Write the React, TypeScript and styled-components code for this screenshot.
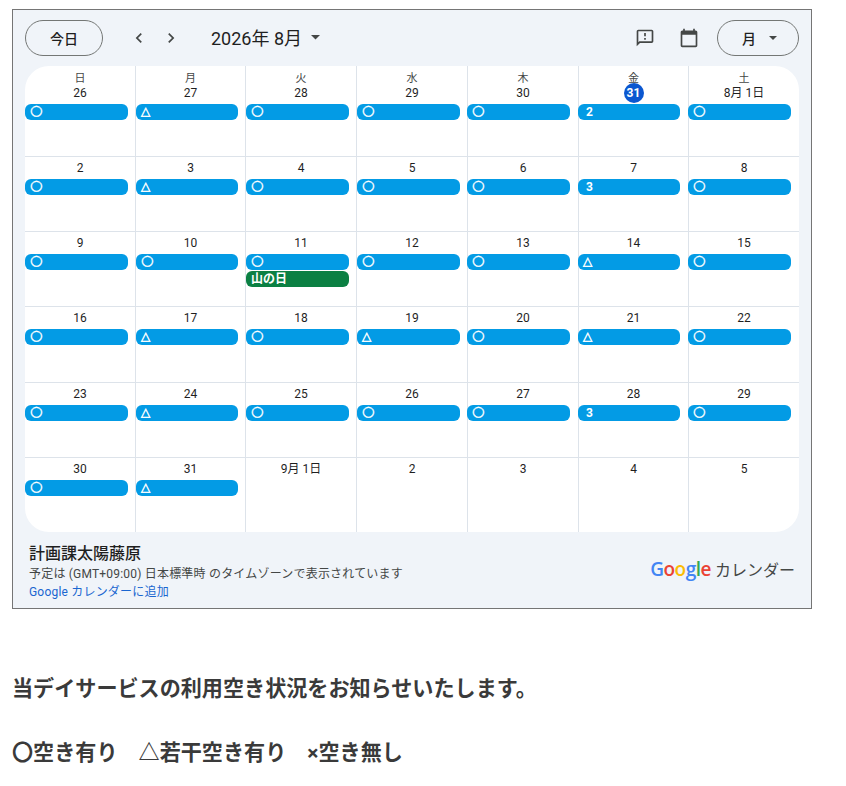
import styled, { createGlobalStyle } from 'styled-components';

const sans = `Roboto, "Noto Sans CJK JP", sans-serif`;

const GlobalStyle = createGlobalStyle`
    html, body {
        margin: 0;
        padding: 0;
        background: #fff;
    }
`;

type Day = { label: string, mark?: string, holiday?: string, today?: boolean };

const weekdays = ['日', '月', '火', '水', '木', '金', '土'];

const days: Day[] = [
    { label: '26', mark: '○' }, { label: '27', mark: '△' }, { label: '28', mark: '○' }, { label: '29', mark: '○' }, { label: '30', mark: '○' }, { label: '31', mark: '2', today: true }, { label: '8月 1日', mark: '○' },
    { label: '2', mark: '○' }, { label: '3', mark: '△' }, { label: '4', mark: '○' }, { label: '5', mark: '○' }, { label: '6', mark: '○' }, { label: '7', mark: '3' }, { label: '8', mark: '○' },
    { label: '9', mark: '○' }, { label: '10', mark: '○' }, { label: '11', mark: '○', holiday: '山の日' }, { label: '12', mark: '○' }, { label: '13', mark: '○' }, { label: '14', mark: '△' }, { label: '15', mark: '○' },
    { label: '16', mark: '○' }, { label: '17', mark: '△' }, { label: '18', mark: '○' }, { label: '19', mark: '△' }, { label: '20', mark: '○' }, { label: '21', mark: '△' }, { label: '22', mark: '○' },
    { label: '23', mark: '○' }, { label: '24', mark: '△' }, { label: '25', mark: '○' }, { label: '26', mark: '○' }, { label: '27', mark: '○' }, { label: '28', mark: '3' }, { label: '29', mark: '○' },
    { label: '30', mark: '○' }, { label: '31', mark: '△' }, { label: '9月 1日' }, { label: '2' }, { label: '3' }, { label: '4' }, { label: '5' },
];

const App = () => {
    return (
        <StyledPage>
            <GlobalStyle />
            <StyledFrame>
                <StyledToolbar>
                    <StyledPill $width={78}>今日</StyledPill>
                    <StyledNav>
                        <StyledIcon viewBox="0 0 24 24"><path d="M15.41 7.41 14 6l-6 6 6 6 1.41-1.41L10.83 12z" /></StyledIcon>
                        <StyledIcon viewBox="0 0 24 24"><path d="M8.59 16.59 10 18l6-6-6-6-1.41 1.41L13.17 12z" /></StyledIcon>
                    </StyledNav>
                    <StyledTitle>2026年 8月</StyledTitle>
                    <StyledCaret viewBox="0 0 10 5"><path d="M0 0l5 5 5-5z" /></StyledCaret>
                    <StyledToolbarRight>
                        <StyledIcon viewBox="0 0 24 24">
                            <path d="M20 2H4c-1.1 0-1.99.9-1.99 2L2 22l4-4h14c1.1 0 2-.9 2-2V4c0-1.1-.9-2-2-2zm0 14H5.17L4 17.17V4h16v12zm-9-4h2v2h-2zm0-6h2v4h-2z" />
                        </StyledIcon>
                        <StyledIcon viewBox="0 0 24 24">
                            <path d="M20 3h-1V1h-2v2H7V1H5v2H4c-1.1 0-2 .9-2 2v16c0 1.1.9 2 2 2h16c1.1 0 2-.9 2-2V5c0-1.1-.9-2-2-2zm0 18H4V8h16v13z" />
                        </StyledIcon>
                        <StyledPill $width={82}>
                            月
                            <StyledCaret viewBox="0 0 10 5"><path d="M0 0l5 5 5-5z" /></StyledCaret>
                        </StyledPill>
                    </StyledToolbarRight>
                </StyledToolbar>

                <StyledGrid>
                    {days.map((day, i) => (
                        <StyledCell key={i} $firstCol={i % 7 === 0} $firstRow={i < 7}>
                            {i < 7 && <StyledWeekday>{weekdays[i]}</StyledWeekday>}
                            <StyledDate>
                                {day.today ? <StyledToday>{day.label}</StyledToday> : day.label}
                            </StyledDate>
                            {day.mark && (
                                <StyledChip $color="#039be5" $overlap={i % 7 >= 4}>
                                    {day.mark === '○' && <StyledCircleMark>{day.mark}</StyledCircleMark>}
                                    {day.mark === '△' && <StyledTriangleMark>{day.mark}</StyledTriangleMark>}
                                    {day.mark !== '○' && day.mark !== '△' && <StyledCountMark>{day.mark}</StyledCountMark>}
                                </StyledChip>
                            )}
                            {day.holiday && <StyledChip $color="#0b8043" $overlap={false}>{day.holiday}</StyledChip>}
                        </StyledCell>
                    ))}
                </StyledGrid>

                <StyledFooter>
                    <div>
                        <StyledCalName>計画課太陽藤原</StyledCalName>
                        <StyledTimezone>予定は (GMT+09:00) 日本標準時 のタイムゾーンで表示されています</StyledTimezone>
                        <StyledAddLink>Google カレンダーに追加</StyledAddLink>
                    </div>
                    <StyledBrand>
                        <StyledLogo>
                            <StyledLetter $color="#4285f4">G</StyledLetter>
                            <StyledLetter $color="#ea4335">o</StyledLetter>
                            <StyledLetter $color="#fbbc05">o</StyledLetter>
                            <StyledLetter $color="#4285f4">g</StyledLetter>
                            <StyledLetter $color="#34a853">l</StyledLetter>
                            <StyledLetter $color="#ea4335">e</StyledLetter>
                        </StyledLogo>
                        <StyledBrandText>カレンダー</StyledBrandText>
                    </StyledBrand>
                </StyledFooter>
            </StyledFrame>

            <StyledNotice>当デイサービスの利用空き状況をお知らせいたします。</StyledNotice>
            <StyledLegend>〇空き有り　△若干空き有り　×空き無し</StyledLegend>
        </StyledPage>
    );
}

export default App;

const StyledPage = styled.div`
    padding: 9px 12px 0;
    height: 777px;
    overflow: hidden;
    font-family: ${sans};
`;

const StyledFrame = styled.div`
    box-sizing: border-box;
    width: 800px;
    height: 600px;
    border: 1px solid #757575;
    background: #f0f4f9;
    padding: 0 12px;
    display: flex;
    flex-direction: column;
    color: #1f1f1f;
`;

const StyledToolbar = styled.div`
    display: flex;
    align-items: center;
    height: 56px;
    flex: none;
`;

const StyledPill = styled.div<{ $width: number }>`
    box-sizing: border-box;
    width: ${p => p.$width}px;
    height: 36px;
    border: 1px solid #747775;
    border-radius: 18px;
    display: flex;
    align-items: center;
    justify-content: center;
    gap: 13px;
    font-size: 14px;
    font-weight: 500;
`;

const StyledNav = styled.div`
    display: flex;
    gap: 12px;
    margin-left: 26px;
`;

const StyledIcon = styled.svg`
    width: 20px;
    height: 20px;
    fill: #444746;
    display: block;
`;

const StyledTitle = styled.div`
    font-size: 18px;
    margin: 0 0 2px 30px;
`;

const StyledCaret = styled.svg`
    width: 9px;
    height: 4.5px;
    fill: #444746;
    margin: 0 0 1px 9px;
    display: block;
`;

const StyledToolbarRight = styled.div`
    margin-left: auto;
    display: flex;
    align-items: center;
    gap: 24px;

    ${StyledPill} {
        margin-left: -6px;
        padding-left: 3px;
    }

    ${StyledCaret} {
        width: 8px;
        height: 4px;
        margin: 0;
    }
`;

const StyledGrid = styled.div`
    flex: none;
    height: 466px;
    display: grid;
    grid-template-columns: 110px 110px 111px 111px 111px 110px 111px;
    grid-template-rows: 90px repeat(5, 1fr);
    background: #fff;
    border-radius: 24px;
    overflow: hidden;
`;

const StyledCell = styled.div<{ $firstCol: boolean, $firstRow: boolean }>`
    min-width: 0;
    box-sizing: border-box;
    border-left: ${p => p.$firstCol ? 'none' : '1px solid #dde3ea'};
    border-top: ${p => p.$firstRow ? 'none' : '1px solid #dde3ea'};
    padding-top: 1px;
    display: flex;
    flex-direction: column;
`;

const StyledWeekday = styled.div`
    height: 16px;
    line-height: 24px;
    text-align: center;
    font-size: 11px;
    color: #444746;
`;

const StyledDate = styled.div`
    height: 20px;
    line-height: 20px;
    margin-bottom: 1px;
    text-align: center;
    font-size: 12px;
`;

const StyledToday = styled.span`
    display: inline-block;
    width: 20px;
    height: 20px;
    border-radius: 50%;
    background: #0b57d0;
    color: #fff;
    font-weight: 700;
`;

const StyledChip = styled.div<{ $color: string, $overlap: boolean }>`
    box-sizing: border-box;
    height: 16px;
    flex: none;
    width: calc(100% - 7px);
    margin: 0 0 1px ${p => p.$overlap ? -1 : 0}px;
    padding-left: 5px;
    border-radius: 6px;
    background: ${p => p.$color};
    color: #fff;
    font-size: 12px;
    font-weight: 700;
    line-height: 16px;
    white-space: nowrap;
`;

const StyledCircleMark = styled.span`
    display: block;
    line-height: 13px;
    font-family: "DejaVu Sans", sans-serif;
    font-size: 14.5px;
    -webkit-text-stroke: 0.4px #fff;
`;

const StyledTriangleMark = styled.span`
    display: block;
    line-height: 14px;
    font-family: "DejaVu Sans", sans-serif;
    font-size: 12px;
    -webkit-text-stroke: 0.5px #fff;
`;

const StyledCountMark = styled.span`
    margin-left: 3px;
`;

const StyledFooter = styled.div`
    flex: 1;
    display: flex;
    align-items: center;
    justify-content: space-between;
    padding: 5px 4px 0;
`;

const StyledCalName = styled.div`
    font-size: 16px;
    line-height: 20px;
    margin-bottom: 1px;
    font-weight: 500;
`;

const StyledTimezone = styled.div`
    font-size: 12px;
    line-height: 18px;
    letter-spacing: 0.2px;
    color: #444746;
`;

const StyledAddLink = styled.div`
    font-size: 12px;
    line-height: 18px;
    letter-spacing: 0.2px;
    color: #1a66d0;
`;

const StyledBrand = styled.div`
    display: flex;
    align-items: center;
    gap: 4px;
    margin-bottom: 8px;
`;

const StyledLogo = styled.div`
    font-family: "Open Sans", sans-serif;
    font-size: 19px;
    font-weight: 600;
    letter-spacing: -0.5px;
`;

const StyledLetter = styled.span<{ $color: string }>`
    color: ${p => p.$color};
`;

const StyledBrandText = styled.div`
    font-size: 16px;
    color: #444746;
`;

const StyledNotice = styled.p`
    margin: 65px 0 0;
    font-size: 21.1px;
    line-height: 30px;
    font-weight: 700;
    color: #3a3a3a;
`;

const StyledLegend = styled.p`
    margin: 34px 0 0;
    font-size: 21.1px;
    line-height: 30px;
    font-weight: 700;
    color: #3a3a3a;
`;
